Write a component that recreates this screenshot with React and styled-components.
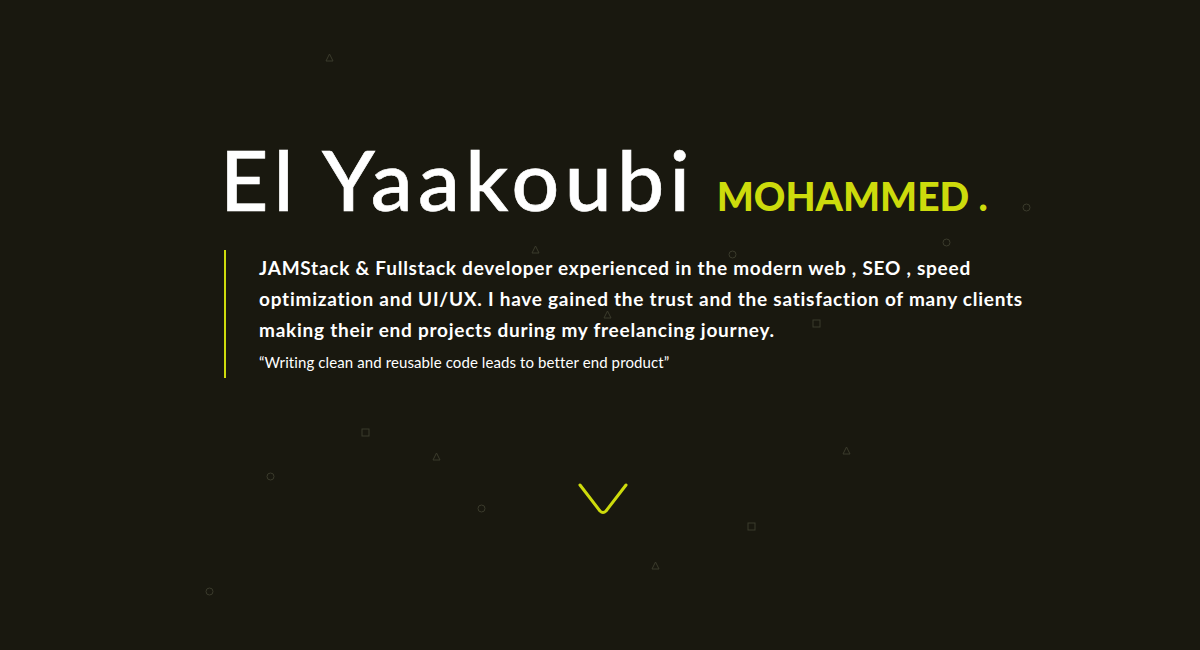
import styled, { createGlobalStyle } from "styled-components";

const GlobalStyle = createGlobalStyle`
  html, body {
    margin: 0;
    padding: 0;
    background: #19180f;
  }
  body {
    font-family: "Lato", "Liberation Sans", sans-serif;
  }
`;

const ACCENT = "#cddb0c";

const shapes = [
  { kind: "tri", x: 325, y: 53 },
  { kind: "circle", x: 1022, y: 203 },
  { kind: "circle", x: 942, y: 238 },
  { kind: "tri", x: 531, y: 245 },
  { kind: "circle", x: 728, y: 250 },
  { kind: "tri", x: 603, y: 310 },
  { kind: "square", x: 812, y: 319 },
  { kind: "square", x: 361, y: 428 },
  { kind: "tri", x: 432, y: 452 },
  { kind: "tri", x: 842, y: 446 },
  { kind: "circle", x: 266, y: 472 },
  { kind: "circle", x: 477, y: 504 },
  { kind: "square", x: 747, y: 522 },
  { kind: "tri", x: 651, y: 561 },
  { kind: "circle", x: 205, y: 587 },
];

const Particle = ({ kind, x, y }) => (
  <SParticle style={{ left: x, top: y }} width="9" height="9" viewBox="0 0 9 9">
    {kind === "tri" && <polygon points="4.5,1 8,8 1,8" />}
    {kind === "circle" && <circle cx="4.5" cy="4.5" r="3.5" />}
    {kind === "square" && <rect x="1" y="1" width="7" height="7" />}
  </SParticle>
);

const App = () => {
  return (
    <>
      <GlobalStyle />
      <SHero>
        {shapes.map((s, i) => (
          <Particle key={i} {...s} />
        ))}
        <SContent>
          <STitle>
            El Yaakoubi <span>MOHAMMED .</span>
          </STitle>
          <SAbout>
            <p>
              JAMStack &amp; Fullstack developer experienced in the modern web , SEO , speed
              optimization and UI/UX. I have gained the trust and the satisfaction of many clients
              making their end projects during my freelancing journey.
            </p>
            <q>Writing clean and reusable code leads to better end product</q>
          </SAbout>
          <SScroll>
            <svg width="50" height="32" viewBox="0 0 50 32">
              <path d="M2 2 L22 28 Q25 31 28 28 L48 2" />
            </svg>
          </SScroll>
        </SContent>
      </SHero>
    </>
  );
};

const SHero = styled.div`
  position: relative;
  width: 100%;
  height: 650px;
  overflow: hidden;
  background: #19180f;
  color: #fff;
`;

const SParticle = styled.svg`
  position: absolute;
  fill: none;
  stroke: #3b3b2c;
  stroke-width: 1;
`;

const SContent = styled.div`
  position: relative;
  display: flex;
  flex-direction: column;
  padding: 137px 0 0 220px;
`;

const STitle = styled.h1`
  margin: 0;
  font-size: 84px;
  font-weight: 500;
  line-height: 1;
  letter-spacing: 5.3px;
  color: #fff;
  white-space: nowrap;
  -webkit-text-stroke: 0.6px #fff;
  span {
    margin-left: -5px;
    font-size: 39px;
    font-weight: 900;
    letter-spacing: 0;
    -webkit-text-stroke: 0;
    color: ${ACCENT};
  }
`;

const SAbout = styled.div`
  margin: 29px 0 0 4px;
  width: 800px;
  border-left: 2px solid ${ACCENT};
  padding: 2px 0 5px 33px;
  p {
    margin: 0;
    width: 770px;
    font-size: 19px;
    font-weight: 700;
    line-height: 31px;
    letter-spacing: 0.75px;
    color: #fff;
  }
  q {
    display: block;
    margin-top: 6px;
    font-size: 15px;
    line-height: 22px;
    letter-spacing: 0.1px;
    color: #fff;
  }
`;

const SScroll = styled.div`
  display: flex;
  justify-content: center;
  width: 766px;
  margin-top: 105px;
  svg {
    fill: none;
    stroke: ${ACCENT};
    stroke-width: 3;
    stroke-linecap: round;
    stroke-linejoin: round;
  }
`;

export default App;
